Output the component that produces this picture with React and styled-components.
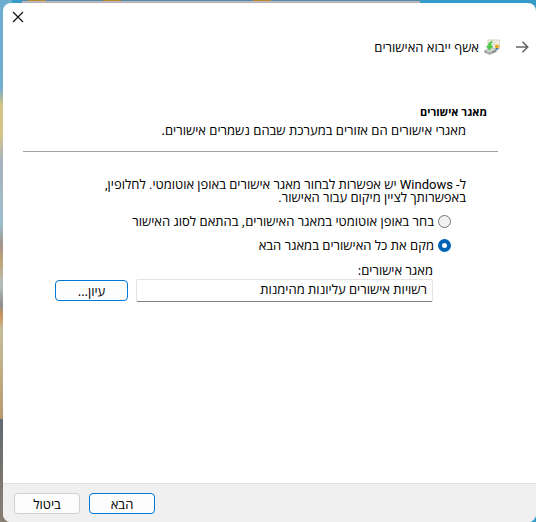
import { useState } from 'react'
import styled, { createGlobalStyle } from 'styled-components'

const GlobalStyle = createGlobalStyle`
  * {
    box-sizing: border-box;
  }
  body {
    margin: 0;
    font-family: "Open Sans", "Segoe UI", sans-serif;
    font-size: 13px;
    color: #000000;
  }
`

const Desktop = styled.div`
  display: flex;
  min-height: 100vh;
  padding: 3px 0 0 3px;
  background:
    linear-gradient(90deg, transparent 28px, #b98a2c 28px, #b98a2c 46px, transparent 46px, transparent 103px, #b98a2c 103px, #b98a2c 121px, transparent 121px, transparent 253px, #b98a2c 253px, #b98a2c 271px, transparent 271px) 0 0 / 100% 1px no-repeat,
    linear-gradient(#c9c5c8, #a9a5a8) 22px 1px / 398px 2px no-repeat,
    linear-gradient(#4f89a6, #4f89a6) 22px 0 / 398px 1px no-repeat,
    linear-gradient(#6caed0 0, #74add0 88px, #d3c383 105px, #d6c48c 135px, #a9b3bd 160px, #9cbccb 225px, #a3938a 245px, #c1a578 262px, #b1c0bb 285px, #8f8f8f 305px, #c9925a 315px, #c4bd9a 330px, #b99a6e 418px, #5f6a72 420px, #77736f 470px, #8a7f74 100%) 0 0 / 12px 100% no-repeat,
    #369bc8;
`

const Dialog = styled.form`
  flex: 1;
  display: flex;
  flex-direction: column;
  background: #ffffff;
  border-radius: 8px;
  overflow: hidden;
`

const TitleBar = styled.div`
  display: flex;
  justify-content: flex-end;
  padding: 8px 9px 0;
`

const IconButton = styled.button`
  display: flex;
  padding: 0;
  border: 0;
  background: none;
`

const Header = styled.header`
  display: flex;
  align-items: center;
  gap: 5px;
  padding: 15px 7px 0;
`

const BackButton = styled(IconButton)`
  margin-left: 10px;
`

const Title = styled.h1`
  margin: 0;
  font-size: 13px;
  font-weight: 400;
  line-height: 18px;
`

const Intro = styled.section`
  margin: 49px 38px 0 20px;
  padding: 0 11px 13px;
  border-bottom: 1px solid #a0a0a0;
`

const Heading = styled.h2`
  margin: 0;
  font-size: 11px;
  font-weight: 700;
  line-height: 14px;
`

const Subtitle = styled.p`
  margin: 3px 0 0;
  padding-right: 21px;
  line-height: 16px;
`

const Content = styled.main`
  flex: 1;
  padding: 26px 70px 20px 52px;
`

// Roboto only covers the Latin words, Hebrew falls through to Open Sans
const Paragraph = styled.p`
  max-width: 372px;
  margin: 0;
  font-family: Roboto, "Open Sans", sans-serif;
  line-height: 13px;
`

const Options = styled.div`
  display: grid;
  gap: 8px;
  margin-top: 9px;
  padding-right: 15px;
`

const Option = styled.label`
  display: flex;
  align-items: center;
  gap: 4px;
  line-height: 16px;
`

const Radio = styled.input`
  appearance: none;
  width: 13px;
  height: 13px;
  margin: 0;
  border: 1px solid #737373;
  border-radius: 50%;
  background: #f2f2f2;
  &:checked {
    border: 4px solid #0063b7;
    background: #ffffff;
  }
`

const Field = styled.div`
  margin-top: 9px;
  padding-right: 33px;
`

const FieldLabel = styled.label`
  display: block;
  margin-bottom: 1px;
  line-height: 16px;
`

const FieldRow = styled.div`
  display: flex;
  align-items: center;
  gap: 8px;
`

const TextInput = styled.input`
  flex: 1;
  min-width: 0;
  height: 23px;
  padding: 0 5px 3px;
  border: 1px solid #e3e3e3;
  border-bottom-color: #808080;
  border-radius: 2px;
  background: #ffffff;
  font: inherit;
  color: inherit;
`

const Button = styled.button`
  width: ${({ $wide }) => ($wide ? '73px' : '66px')};
  height: 21px;
  padding: 0;
  border: 1px solid ${({ $primary }) => ($primary ? '#0078d4' : '#d0d0d0')};
  border-radius: 4px;
  background: #fdfdfd;
  font: inherit;
  line-height: 16px;
  color: inherit;
`

const Footer = styled.footer`
  display: flex;
  justify-content: flex-end;
  gap: 9px;
  padding: 9px 11px 8px;
  border-top: 1px solid #dfdfdf;
  background: #f0f0f0;
`

function CloseIcon() {
  return (
    <svg width="12" height="12" viewBox="0 0 12 12" fill="none" stroke="#111111" strokeWidth="1.2">
      <path d="M1 1 11 11M11 1 1 11" />
    </svg>
  )
}

function ArrowIcon() {
  return (
    <svg width="14" height="14" viewBox="0 0 14 14" fill="none" stroke="#666666" strokeWidth="1.6">
      <path d="M1 7H12.5M7.5 1.8 12.7 7 7.5 12.2" />
    </svg>
  )
}

function CertificateIcon() {
  return (
    <svg width="16" height="16" viewBox="0 0 16 16" fill="none">
      <path d="M4 1H15.5V10H4Z" fill="#f5f1e6" stroke="#d6cfba" />
      <path d="M6 3.5H13M7.5 5.5H12" stroke="#dcd8cc" />
      <path d="M0.5 11.5 8 8.5 12.5 10.5 5.5 13.5Z" fill="#d4d8d6" stroke="#a4aaa8" strokeWidth="0.6" />
      <path d="M0.5 11.5V13.5L5.5 15.8 12.5 12.8V10.5L5.5 13.5Z" fill="#858b89" />
      <path d="M2 12.8 5.5 14.4 8 13.4" stroke="#dfe3e1" strokeWidth="0.7" />
      <path d="M11.7 8.5V11.2L13 10.2 14.2 11.2V8.5Z" fill="#3a72b8" />
      <circle cx="12.9" cy="7.3" r="1.9" fill="#f0a51c" />
      <path d="M8.5 2C5.5 2.5 4.3 4.5 4.2 7.2L2.3 7.3 5.3 11.3 9 7.1 7 7.1C7 5 7.3 3.5 8.5 2Z" fill="#4cd04a" stroke="#36ad3b" strokeWidth="0.4" />
    </svg>
  )
}

export default function App() {
  const [mode, setMode] = useState('place')
  const [store, setStore] = useState('רשויות אישורים עליונות מהימנות')

  return (
    <>
      <GlobalStyle />
      <Desktop dir="rtl" lang="he">
        <Dialog onSubmit={(e) => e.preventDefault()}>
          <TitleBar>
            <IconButton type="button" aria-label="סגור">
              <CloseIcon />
            </IconButton>
          </TitleBar>
          <Header>
            <BackButton type="button" aria-label="הקודם">
              <ArrowIcon />
            </BackButton>
            <CertificateIcon />
            <Title>אשף ייבוא האישורים</Title>
          </Header>
          <Intro>
            <Heading>מאגר אישורים</Heading>
            <Subtitle>מאגרי אישורים הם אזורים במערכת שבהם נשמרים אישורים.</Subtitle>
          </Intro>
          <Content>
            <Paragraph>
              ל- Windows יש אפשרות לבחור מאגר אישורים באופן אוטומטי. לחלופין,
              באפשרותך לציין מיקום עבור האישור.
            </Paragraph>
            <Options>
              <Option>
                <Radio type="radio" name="mode" checked={mode === 'auto'} onChange={() => setMode('auto')} />
                בחר באופן אוטומטי במאגר האישורים, בהתאם לסוג האישור
              </Option>
              <Option>
                <Radio type="radio" name="mode" checked={mode === 'place'} onChange={() => setMode('place')} />
                מקם את כל האישורים במאגר הבא
              </Option>
            </Options>
            <Field>
              <FieldLabel htmlFor="store">מאגר אישורים:</FieldLabel>
              <FieldRow>
                <TextInput id="store" value={store} onChange={(e) => setStore(e.target.value)} />
                <Button type="button" $wide $primary>עיון...</Button>
              </FieldRow>
            </Field>
          </Content>
          <Footer>
            <Button type="submit" $primary>הבא</Button>
            <Button type="button">ביטול</Button>
          </Footer>
        </Dialog>
      </Desktop>
    </>
  )
}
